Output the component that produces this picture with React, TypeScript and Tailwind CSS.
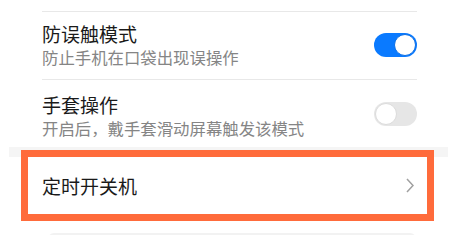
import React from "react";

function Toggle({ on }: { on: boolean }) {
  return (
    <div
      className={
        "flex h-[24px] w-[43px] shrink-0 items-center rounded-full px-[1px] " +
        (on ? "justify-end bg-[#0a7aff]" : "justify-start bg-[#e6e6e6]")
      }
    >
      <div
        className={
          "h-[22px] w-[22px] rounded-full bg-white border " +
          (on ? "border-[#0a6ee6]" : "border-[#dcdcdc]")
        }
      />
    </div>
  );
}

export default function App() {
  return (
    <div
      className="relative h-[235px] w-[464px] overflow-hidden bg-white"
      style={{ fontFamily: '"Noto Sans CJK SC", "Noto Sans", sans-serif' }}
    >
      <div className="pl-[42px] pr-[47px] pt-[11px]">
        <div className="h-px bg-[#e8e8e8]" />
        <div className="flex items-center justify-between pt-[10px] pb-[11px]">
          <div>
            <div className="text-[19px] leading-[24px] text-[#1a1a1a]">防误触模式</div>
            <div className="text-[16.4px] leading-[22px] text-[#858585]">防止手机在口袋出现误操作</div>
          </div>
          <Toggle on />
        </div>
        <div className="h-px bg-[#e8e8e8]" />
        <div className="flex h-[67px] items-center justify-between">
          <div className="pt-[4px]">
            <div className="text-[19px] leading-[24px] text-[#1a1a1a]">手套操作</div>
            <div className="text-[16.4px] leading-[22px] text-[#858585]">开启后，戴手套滑动屏幕触发该模式</div>
          </div>
          <Toggle on={false} />
        </div>
      </div>
      <div className="ml-[9px] mr-[16px] h-[10px] bg-[#f5f5f5]" />
      <div className="flex h-[57px] items-center justify-between pl-[42px] pr-[50px]">
        <div className="pt-[1px] text-[19px] leading-[24px] text-[#1a1a1a]">定时开关机</div>
        <svg width="8" height="15" viewBox="0 0 8 15" fill="none">
          <polyline points="1,1 7,7.5 1,14" stroke="#a0a0a0" strokeWidth="1.5" strokeLinejoin="miter" />
        </svg>
      </div>
      <div className="mx-[48px] mt-[19px] h-[6px] rounded-t-[6px] bg-[#f2f2f2]" />
      <div className="absolute left-[21px] top-[150px] h-[71px] w-[413px] border-[7px] border-[#ff6b3b]" />
    </div>
  );
}
